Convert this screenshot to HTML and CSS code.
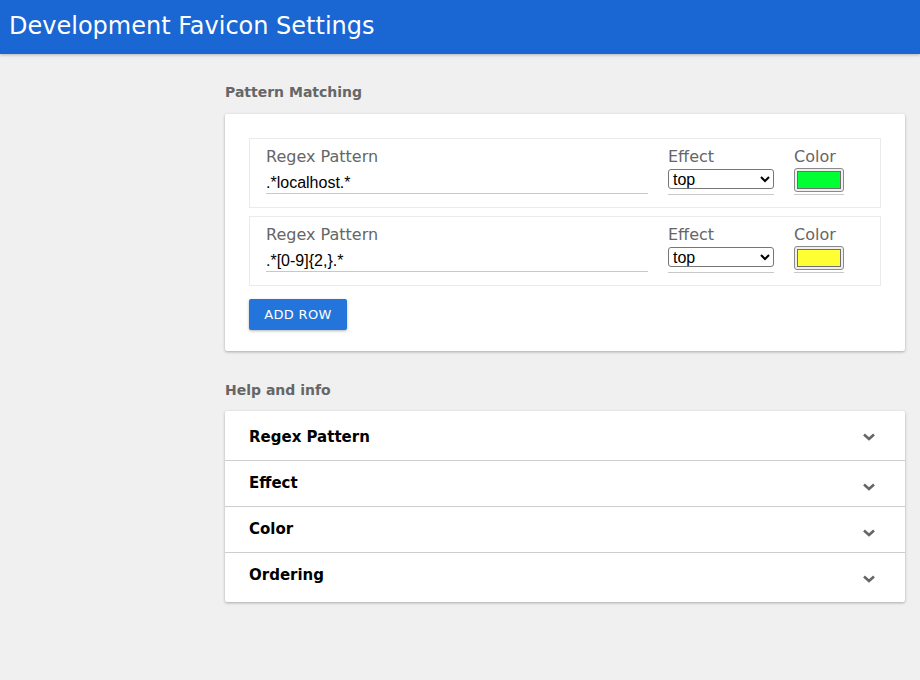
FILE: index.html
```html
<!DOCTYPE html>
<html>
<head>
<meta charset="utf-8">
<link rel="stylesheet" href="styles.css">
</head>
<body>
<header class="topbar"><h1 class="title">Development Favicon Settings</h1></header>
<main class="main">
  <h2 class="section-label">Pattern Matching</h2>
  <section class="card">
    <div class="row">
      <div class="field field-regex">
        <label class="field-label">Regex Pattern</label>
        <input class="text-input" type="text" value=".*localhost.*">
      </div>
      <div class="field field-effect">
        <label class="field-label">Effect</label>
        <div class="underline"><select class="select"><option>top</option></select></div>
      </div>
      <div class="field field-color">
        <label class="field-label">Color</label>
        <div class="underline"><input class="color" type="color" value="#00ff33"></div>
      </div>
    </div>
    <div class="row">
      <div class="field field-regex">
        <label class="field-label">Regex Pattern</label>
        <input class="text-input" type="text" value=".*[0-9]{2,}.*">
      </div>
      <div class="field field-effect">
        <label class="field-label">Effect</label>
        <div class="underline"><select class="select"><option>top</option></select></div>
      </div>
      <div class="field field-color">
        <label class="field-label">Color</label>
        <div class="underline"><input class="color" type="color" value="#ffff33"></div>
      </div>
    </div>
    <button class="btn">ADD ROW</button>
  </section>
  <h2 class="section-label help-label">Help and info</h2>
  <section class="accordion">
    <div class="acc-item acc-first"><span class="acc-title">Regex Pattern</span><svg class="chev" width="14" height="10" viewBox="0 0 14 10"><path d="M2 2.5 L7 7 L12 2.5" fill="none" stroke="#666" stroke-width="2.6"/></svg></div>
    <div class="acc-item"><span class="acc-title">Effect</span><svg class="chev" width="14" height="10" viewBox="0 0 14 10"><path d="M2 2.5 L7 7 L12 2.5" fill="none" stroke="#666" stroke-width="2.6"/></svg></div>
    <div class="acc-item"><span class="acc-title">Color</span><svg class="chev" width="14" height="10" viewBox="0 0 14 10"><path d="M2 2.5 L7 7 L12 2.5" fill="none" stroke="#666" stroke-width="2.6"/></svg></div>
    <div class="acc-item acc-last"><span class="acc-title">Ordering</span><svg class="chev" width="14" height="10" viewBox="0 0 14 10"><path d="M2 2.5 L7 7 L12 2.5" fill="none" stroke="#666" stroke-width="2.6"/></svg></div>
  </section>
</main>
</body>
</html>
```
FILE: styles.css
```css
* { box-sizing: border-box; }
html, body { margin: 0; padding: 0; }
body {
  background: #f0f0f0;
  font-family: "DejaVu Sans", sans-serif;
  width: 920px;
  height: 680px;
  overflow: hidden;
}
.topbar {
  background: #1a66d3;
  height: 54px;
  display: flex;
  align-items: center;
  padding-left: 9px;
  box-shadow: 0 1px 3px rgba(0,0,0,0.25);
}
.title {
  margin: 0;
  color: #fff;
  font-weight: normal;
  font-size: 24px;
  line-height: 28px;
  margin-top: -3px;
}
.main {
  padding: 30px 15px 0 225px;
}
.section-label {
  margin: 0 0 13px 0;
  font-size: 14px;
  line-height: 17px;
  color: #666;
  font-weight: bold;
}
.help-label { margin-top: 31px; margin-bottom: 12px; }
.card {
  background: #fff;
  box-shadow: 0 1px 3px rgba(0,0,0,0.3);
  padding: 24px 24px 21px 24px;
  border-radius: 2px;
}
.row {
  border: 1px solid #ebebeb;
  height: 70px;
  display: flex;
  padding: 8px 0 0 16px;
  gap: 20px;
  margin-bottom: 8px;
}
.field { display: flex; flex-direction: column; }
.field-label {
  font-size: 16px;
  line-height: 19px;
  color: #666;
  height: 21px;
}
.field-regex { width: 382px; }
.field-effect { width: 106px; }
.field-color { width: 50px; }
.text-input {
  border: none;
  border-bottom: 1px solid #c8c8c8;
  font-family: "Liberation Sans", Arial, sans-serif;
  font-size: 16px;
  padding: 5px 0 0 0;
  height: 27px;
  outline: none;
  color: #000;
  margin-top: -1px;
}
.underline {
  border-bottom: 1px solid #c8c8c8;
  height: 27px;
  padding-top: 1px;
}
.select {
  width: 106px;
  height: 20px;
  font-family: "Liberation Sans", Arial, sans-serif;
  font-size: 16px;
  border: 1px solid #767676;
  border-radius: 3px;
  background: #fff;
  color: #000;
  padding: 0;
  margin: 0;
}
.color {
  display: block;
  width: 50px;
  height: 24px;
  padding: 1px;
  margin: -1px 0 0 0;
  border: 1px solid #8a8a8a;
  border-radius: 3px;
  background: #efefef;
}
.color::-webkit-color-swatch-wrapper { padding: 1px; }
.color::-webkit-color-swatch { border: 1px solid #6f6f6f; border-radius: 0; }
.btn {
  margin-top: 5px;
  background: #2374db;
  color: #fff;
  border: none;
  border-radius: 2px;
  font-family: "DejaVu Sans", sans-serif;
  font-size: 13px;
  letter-spacing: 0.3px;
  width: 98px;
  height: 31px;
  padding: 0;
  box-shadow: 0 1px 3px rgba(0,0,0,0.3);
}
.accordion {
  background: #fff;
  box-shadow: 0 1px 3px rgba(0,0,0,0.3);
  border-radius: 2px;
}
.acc-item {
  display: flex;
  align-items: center;
  justify-content: space-between;
  padding: 0 29px 0 24px;
  height: 46px;
  border-bottom: 1px solid #cdcdcd;
}
.acc-first { height: 50px; padding-top: 4px; }
.acc-last { border-bottom: none; height: 49px; padding-bottom: 4px; }
.acc-title {
  font-weight: bold;
  font-size: 15px;
  color: #000;
  margin-top: -2px;
}
.chev { margin-top: 6px; }
.acc-first .chev { margin-top: -1px; }
```
